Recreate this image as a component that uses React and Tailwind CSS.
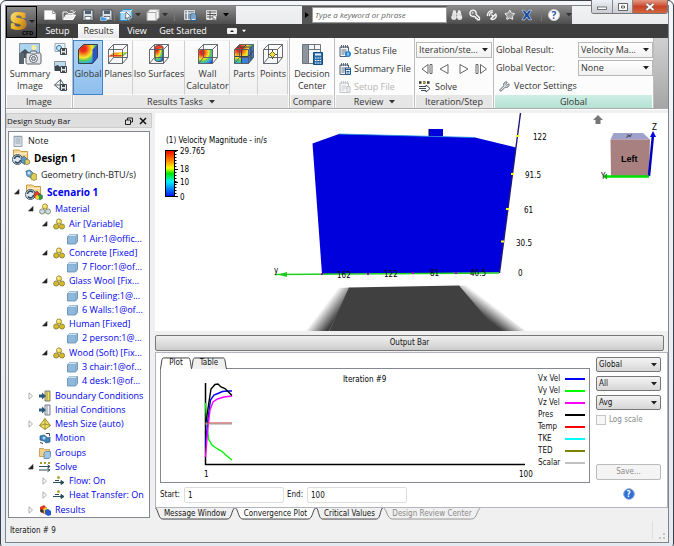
import React, { useState } from 'react';
import clsx from 'clsx';
import { Star, Wrench, SatelliteDish, Binoculars, KeyRound } from 'lucide-react';

const WIRE = 'M1.5 6.5h14v14h-14zM1.5 6.5l5-5h14l-5 5M20.5 1.5v13l-5 6M6.5 1.5v13h14M1.5 20.5l5-6';

const treeItems = [
  { label: 'Air [Variable]', pad: 'pl-8', icon: 'mat', open: true },
  { label: '1 Air:1@offic...', pad: 'pl-[57px]', icon: 'part' },
  { label: 'Concrete [Fixed]', pad: 'pl-8', icon: 'mat', open: true },
  { label: '7 Floor:1@of...', pad: 'pl-[57px]', icon: 'part' },
  { label: 'Glass Wool [Fix...', pad: 'pl-8', icon: 'mat', open: true },
  { label: '5 Ceiling:1@...', pad: 'pl-[57px]', icon: 'part' },
  { label: '6 Walls:1@of...', pad: 'pl-[57px]', icon: 'part' },
  { label: 'Human [Fixed]', pad: 'pl-8', icon: 'mat', open: true },
  { label: '2 person:1@...', pad: 'pl-[57px]', icon: 'part' },
  { label: 'Wood (Soft) [Fix...', pad: 'pl-8', icon: 'mat', open: true },
  { label: '3 chair:1@of...', pad: 'pl-[57px]', icon: 'part' },
  { label: '4 desk:1@of...', pad: 'pl-[57px]', icon: 'part' },
  { label: 'Boundary Conditions', pad: 'pl-[18px]', icon: 'boundary', open: false },
  { label: 'Initial Conditions', pad: 'pl-[30px]', icon: 'initial' },
  { label: 'Mesh Size (auto)', pad: 'pl-[18px]', icon: 'mesh', open: false },
  { label: 'Motion', pad: 'pl-[30px]', icon: 'motion' },
  { label: 'Groups', pad: 'pl-[30px]', icon: 'groups' },
  { label: 'Solve', pad: 'pl-[18px]', icon: 'solve', open: true },
  { label: 'Flow: On', pad: 'pl-8', icon: 'flow', open: false },
  { label: 'Heat Transfer: On', pad: 'pl-8', icon: 'flow', open: false },
  { label: 'Results', pad: 'pl-[18px]', icon: 'results', open: false },
];

const series = [
  ['Vx Vel', '#0000ff'],
  ['Vy Vel', '#00ff00'],
  ['Vz Vel', '#ff00ff'],
  ['Pres', '#000000'],
  ['Temp', '#ff0000'],
  ['TKE', '#00ffff'],
  ['TED', '#808000'],
  ['Scalar', '#c0c0c0'],
];

const Rainbow = ({ id }) => (
  <radialGradient id={id} cx="25%" cy="22%" r="95%">
    <stop offset="0.15" stopColor="#e8281c" />
    <stop offset="0.32" stopColor="#f58a1c" />
    <stop offset="0.5" stopColor="#f8e72c" />
    <stop offset="0.66" stopColor="#5cc95a" />
    <stop offset="0.8" stopColor="#33b6dd" />
    <stop offset="1" stopColor="#2b50d0" />
  </radialGradient>
);

const TaskIcon = ({ kind }) => {
  const fill = `url(#${kind})`;
  return (
    <svg viewBox="0 0 22 22" className="h-[22px] w-[22px]" fill="none">
      <defs>
        <Rainbow id={kind} />
      </defs>
      {kind === 'global' && (
        <>
          <path d="M1.5 6.5l5-5h14v13l-5 6h-14z" fill={fill} />
          <path d="M15.5 6.5l5-5v13l-5 6z" fill="#2c55c8" />
          <path d="M1.5 6.5l5-5h14v13l-5 6h-14z" stroke="#3a3f48" strokeLinejoin="round" />
        </>
      )}
      {kind === 'planes' && (
        <>
          <path d="M1.5 13.5l5-4h14l-5 4z" fill="#f5a51e" />
          <path d="M9 13.5l4-4h7.5l-5 4z" fill="#f5e32c" />
          <path d="M1.5 13.5l2-1.6h12l-2 1.6z" fill="#e8401c" />
          <path d="M14 13.5l4-4h2.5l-5 4z" fill="#55c060" />
        </>
      )}
      {kind === 'iso' && (
        <>
          <path d="M7 4c0-2 8-2 8 0v13c0 2-8 2-8 0z" fill={fill} stroke="#3a3f48" />
          <ellipse cx="11" cy="4" rx="4" ry="1.5" fill="#e8402c" />
        </>
      )}
      {kind === 'wall' && <path d="M1.5 6.5h14v14h-14z" fill={fill} />}
      {kind === 'parts' && (
        <>
          <path d="M1.5 6.5l5-5h14v13l-5 6h-14z" fill={fill} />
          <path d="M15.5 6.5l5-5v13l-5 6zM8.5 13.5h7v7h-7z" fill="#3f7ed8" />
          <path d="M13.5 1.5l-5 5v14M1.5 13.5h14l5-6M4 4h14v13" stroke="#3a3f48" />
        </>
      )}
      {kind !== 'global' && <path d={WIRE} stroke="#555a61" strokeWidth="0.9" strokeLinejoin="round" />}
      {kind === 'points' && (
        <>
          <path d="M10.5 7v9M6 11.5h9" stroke="#3a3f48" />
          <path d="M10.5 8.5l3 3-3 3-3-3z" fill="#f5dc3c" stroke="#62752a" />
        </>
      )}
    </svg>
  );
};

const Balls = ({ front }) => (
  <>
    <circle cx="6" cy="3.5" r="2.6" fill="#efd95a" stroke="#857019" strokeWidth="0.7" />
    <circle cx="3.2" cy="8.5" r="2.6" fill={front} stroke="#68703a" strokeWidth="0.7" />
    <circle cx="9" cy="8.5" r="2.6" fill={front} stroke="#68703a" strokeWidth="0.7" />
    <circle cx="5.3" cy="2.8" r="0.9" fill="#fff8cf" />
  </>
);

const TreeIcon = ({ name }) => (
  <svg viewBox="0 0 12 12" className="h-3 w-3 shrink-0" fill="none">
    {name === 'note' && (
      <>
        <path d="M2 1.5h8v10H2z" fill="#d9e1ea" stroke="#98a5b3" />
        <path d="M3.5 4h5M3.5 6h5M3.5 8h5M3 .5v2M5 .5v2M7 .5v2M9 .5v2" stroke="#8796a7" strokeWidth="0.8" />
      </>
    )}
    {name === 'geometry' && (
      <>
        <path d="M1 2l4-1 4 4-2 4-5-2z" fill="#6ba3cd" stroke="#376c94" strokeWidth="0.8" />
        <path d="M6 6l3-2 3 2v4l-3 1.5-3-1.5z" fill="#e0cd57" stroke="#8a7d28" strokeWidth="0.8" />
        <circle cx="4" cy="4" r="1.5" fill="#c5e0f2" />
      </>
    )}
    {name === 'material' && <Balls front="#c7dcea" />}
    {name === 'mat' && <Balls front="#d9b928" />}
    {name === 'part' && (
      <>
        <path d="M1.5 3.5l2-2h8v7l-2 2.5h-8z" fill="#8fb9dc" stroke="#5d87ad" strokeWidth="0.8" />
        <path d="M1.5 3.5l2-2h8l-2 2z" fill="#cfe3f3" />
        <path d="M1.5 3.5h8V11M9.5 3.5l2-2" stroke="#7aa2c6" strokeWidth="0.7" />
      </>
    )}
    {(name === 'boundary' || name === 'initial') && (
      <>
        <path d="M6 1h5v10H6z" fill={name === 'boundary' ? '#f3df45' : '#eef1f3'} stroke="#55606a" strokeWidth="0.8" />
        <path d="M8 1v10" stroke="#7d868e" strokeWidth="0.8" />
        <path d="M0 4.5h3v-2l4 3.5-4 3.5v-2H0z" fill="#2e5b7c" />
      </>
    )}
    {name === 'mesh' && (
      <>
        <path d="M6 .5l5.5 7L6 11.5.5 7.5z" fill="#f1df6b" stroke="#92801d" strokeWidth="0.9" />
        <path d="M6 .5v11M.5 7.5L6 6l5.5 1.5" stroke="#92801d" strokeWidth="0.8" />
      </>
    )}
    {name === 'motion' && (
      <>
        <path d="M1 4l4-1 4 3 2-1v5l-4 1-2-2-4-1z" fill="#3d84b8" stroke="#1e5580" strokeWidth="0.7" />
        <path d="M7 1.5h3.5V4M1 10.5l3 1" stroke="#444" />
        <circle cx="5" cy="6" r="1.5" fill="#b6d7ee" />
      </>
    )}
    {name === 'groups' && (
      <>
        <path d="M.5 1.5h4l1 1h5v7H.5z" fill="#f0cf88" stroke="#bd9345" strokeWidth="0.8" />
        <path d="M5 6l1.5-1.5h5v5L10 11.5H5z" fill="#9fc5e4" stroke="#5582a8" strokeWidth="0.8" />
      </>
    )}
    {name === 'solve' && (
      <>
        <path d="M1 2h2M5 2h2M9 2h2" stroke="#a79b25" strokeWidth="2" />
        <path d="M0 5.5h11M0 9h11M8.5 3.8L11 5.5 8.5 7.2M8.5 7.3L11 9l-2.5 1.7" stroke="#294f5f" />
      </>
    )}
    {name === 'flow' && (
      <>
        <circle cx="5.5" cy="2.5" r="1.5" fill="#b6a52c" />
        <path d="M0 7.5h11M8 5.5l3 2-3 2zM2 5.5h4" stroke="#294f5f" fill="#294f5f" />
      </>
    )}
    {name === 'results' && (
      <>
        <path d="M1 3l4-2 3 3v4L5 10 1 7z" fill="#e03a20" />
        <path d="M3 6l4-3 2 3-3 4z" fill="#f2d32f" />
        <path d="M6 6l3-1 3 2v4l-3 1-3-2z" fill="#2b56c9" />
        <circle cx="3" cy="7" r="1.8" fill="#333" />
      </>
    )}
  </svg>
);

const FolderIcon = ({ scenario }) => (
  <svg viewBox="0 0 18 17" className="h-[17px] w-[18px] shrink-0" fill="none">
    <path d="M1.5 3V1h6L9 2.5h6.5V13h-14z" fill="#f7d893" stroke="#c89a45" />
    <path d="M2 4.5h13" stroke="#fff0c8" />
    <circle cx="5.5" cy="10.5" r="5" fill="#dfe7ed" stroke="#3f5b70" />
    <path d="M2.5 10a3 3 0 015.5-1.5M8.5 11a3 3 0 01-5.5 1.5" stroke="#2d4a60" strokeWidth="1.6" />
    <path d="M9 9l3-2 3 3v4l-3 1.5-3-3z" fill={scenario ? '#e33a22' : '#5c97c4'} stroke="#394c5a" strokeWidth="0.6" />
    <path d="M13 11l2.5-1 2 1.5v3L15 16l-2-1.5z" fill={scenario ? '#2d9b3a' : '#e0cd57'} stroke="#394c5a" strokeWidth="0.5" />
    {scenario && <path d="M10.5 12l2-1 1.5 1.5v2l-1.5 1-2-1z" fill="#f2d32f" />}
  </svg>
);

const Twisty = ({ open }) => (
  <svg viewBox="0 0 8 8" className="mr-1 h-2 w-2 shrink-0">
    {open ? <path d="M6 1.5V6H1.5z" fill="#222" stroke="#222" strokeWidth="0.6" /> : <path d="M2 .8L5.5 4 2 7.2z" fill="#fff" stroke="#999" strokeWidth="0.8" />}
  </svg>
);

const Caret = ({ className }) => (
  <svg viewBox="0 0 6 4" className={clsx('h-1 w-1.5 shrink-0', className)}>
    <path d="M0 0h6L3 3.5z" fill="currentColor" />
  </svg>
);

const Picker = ({ label, value, className, selectClass }) => (
  <div className={clsx('relative', className)}>
    <select aria-label={label} defaultValue={value} className={clsx('block w-full appearance-none truncate border pr-3 pl-0.5 outline-none', selectClass)}>
      <option>{value}</option>
    </select>
    <Caret className="pointer-events-none absolute top-1/2 right-1 -translate-y-1/2 text-[#222]" />
  </div>
);

const PageIcon = ({ kind }) => (
  <svg viewBox="0 0 12 12" className="h-3 w-3 shrink-0" fill="none">
    <g opacity={kind === 'setup' ? 0.35 : 1}>
      <path d="M1 2h8.5v9.5H1z" fill="#f3f5f7" stroke="#51606e" />
      <path d="M2.5 0v3M4.5 0v3M6.5 0v3M8.5 0v3M2.5 5h5M2.5 7h5M2.5 9h3" stroke="#51606e" strokeWidth="0.9" />
      {kind === 'status' && (
        <>
          <circle cx="9" cy="9" r="3" fill="#2486d8" />
          <path d="M9 8v2.5M9 6.6v.8" stroke="#fff" />
        </>
      )}
      {kind === 'summary' && (
        <>
          <path d="M6.5 5h5v6.5h-5z" fill="#fff" stroke="#1e5a92" />
          <path d="M7 6.5h4M7.5 8.5h3M7.5 10h3" stroke="#1e5a92" />
        </>
      )}
      {kind === 'setup' && <path d="M8 5.5h3v6H8z" fill="#ddd" stroke="#51606e" />}
    </g>
  </svg>
);

const Panel = ({ title, className, arrow, tint, children }) => (
  <section className={clsx('flex shrink-0 flex-col border-r border-[#bdbdbd] bg-[#fcfcfc] pt-0.5', className)}>
    <div className="flex flex-1">{children}</div>
    <h2 className={clsx('mx-px flex h-[13px] items-center justify-center gap-1.5', tint ? 'bg-linear-to-b from-[#cdeee4] to-[#b5e2d4]' : 'bg-[#e6e6e6]')}>
      {title}
      {arrow && <Caret />}
    </h2>
  </section>
);

const TaskButton = ({ kind, label, className, active, onClick }) => (
  <button
    onClick={onClick}
    className={clsx(
      'flex shrink-0 flex-col items-center border pt-0.5',
      active ? 'border-[#3f83c9] bg-linear-to-b from-[#b5d5f5] to-[#8fbfee]' : 'border-transparent border-r-[#cfcfcf] bg-linear-to-b from-[#fcfcfc] to-[#f0f0f0]',
      className
    )}
  >
    <TaskIcon kind={kind} />
    <span className="mt-[3px]">{label}</span>
  </button>
);

const ToolIcon = ({ kind }) => (
  <svg viewBox="0 0 14 12" className="h-3 w-3.5 shrink-0" fill="none">
    {kind === 'new' && (
      <>
        <path d="M1.5 1.5h8l3 3v6h-11z" fill="#fff" stroke="#ccc" />
        <path d="M9.5 1.5v3h3" stroke="#999" />
      </>
    )}
    {kind === 'open' && (
      <>
        <path d="M1 10.5V3h4l1 1.5h5V6" stroke="#f0f0f0" />
        <path d="M1.5 10.5L4 6h9.5L11 10.5z" fill="#eee" stroke="#fff" />
        <path d="M8 2.5c2-2 4-1 4 1M12 4l1.5-1.5M12 4l-1.5-1" stroke="#eee" />
      </>
    )}
    {(kind === 'save' || kind === 'saveas') && (
      <>
        <path d="M2 1h10v10.5H2z" fill="#dce2e7" stroke="#46525d" />
        <path d="M4 1.5h6V5H4z" fill="#51606d" />
        <path d="M4 7.5h6V11H4z" fill="#fff" stroke="#46525d" strokeWidth="0.8" />
        {kind === 'saveas' && <path d="M0 9c2-3 4 1 7-1l-1 4H1z" fill="#4b9ad5" stroke="#e8f3fb" strokeWidth="0.6" />}
      </>
    )}
    {(kind === 'cube' || kind === 'bluecube') && (
      <>
        <path d="M1 3.5L4 .5h9v8l-3 3H1z" fill={kind === 'cube' ? '#f4f4f4' : '#a8d5ee'} stroke={kind === 'cube' ? '#aaa' : '#2e8ec3'} />
        <path d="M1 3.5h9v8M10 3.5l3-3" stroke={kind === 'cube' ? '#aaa' : '#e7f6ff'} />
        {kind === 'bluecube' && <path d="M7 3l5 5H9.5l1 3-1.5.5-1-3L6.5 10z" fill="#fff" stroke="#333" strokeWidth="0.6" />}
      </>
    )}
    {(kind === 'book' || kind === 'list') && (
      <>
        <path d="M1.5 1.5h10v9h-10z" fill={kind === 'list' ? '#f1f1f1' : '#8b98a5'} stroke="#d6d6d6" />
        <path d={kind === 'list' ? 'M2 3h9M2 5.5h9M2 8h9M5 2v8' : 'M4.5 1.5v9M2 4h9'} stroke={kind === 'list' ? '#555' : '#eee'} />
        {kind === 'book' && <path d="M8 5h5v6.5H8zM9 7h3M9 9h3" fill="#dcecf9" stroke="#1f5f9d" />}
        {kind === 'list' && <path d="M8 5l5 4h-2l1 2.5h-1.5l-1-2L8 10.5z" fill="#fff" stroke="#333" strokeWidth="0.6" />}
      </>
    )}
  </svg>
);

const tabPaths = {
  up: 'M0.5 12.5C3.5 11 3 1 8 1H72C77 1 76.5 11 79.5 12.5',
  down: 'M0.5 0C3.5 2 3 11.5 8 11.5H72C77 11.5 76.5 2 79.5 0',
};

const Tab = ({ label, dir = 'down', active, disabled, className }) => (
  <button disabled={disabled} className={clsx('relative flex h-3 shrink-0 items-center justify-center whitespace-nowrap', disabled && 'text-[#8a8a8a]', active && 'z-10', className)}>
    <svg viewBox="0 0 80 12.5" preserveAspectRatio="none" className="absolute inset-0 h-full w-full">
      <path d={tabPaths[dir]} fill={active ? '#fff' : '#f0f0f0'} stroke={disabled ? '#999' : '#444'} vectorEffect="non-scaling-stroke" />
    </svg>
    <span className="relative">{label}</span>
  </button>
);

const Scene = () => (
  <svg viewBox="0 0 513 218" preserveAspectRatio="xMinYMid slice" className="block h-[218px] w-full bg-white" fontSize="8">
    <defs>
      <linearGradient id="scale" x1="0" y1="0" x2="0" y2="1">
        <stop offset="0" stopColor="#f00000" />
        <stop offset="0.25" stopColor="#ff9a00" />
        <stop offset="0.38" stopColor="#ffff00" />
        <stop offset="0.5" stopColor="#00e800" />
        <stop offset="0.68" stopColor="#00f0ff" />
        <stop offset="1" stopColor="#0010f0" />
      </linearGradient>
      <linearGradient id="fadeL" gradientUnits="userSpaceOnUse" x1="167" y1="196" x2="180" y2="206">
        <stop offset="0" stopColor="#fff" />
        <stop offset="1" stopColor="#404040" />
      </linearGradient>
      <linearGradient id="fadeR" gradientUnits="userSpaceOnUse" x1="342" y1="195" x2="333" y2="207">
        <stop offset="0" stopColor="#fff" />
        <stop offset="1" stopColor="#404040" />
      </linearGradient>
    </defs>

    {/* floor shadow */}
    <path d="M183 175l12-.5-21 44h-24z" fill="url(#fadeL)" />
    <path d="M303 172.5h10l58 46h-29z" fill="url(#fadeR)" />
    <path d="M194 174.5l110-2 39 46H174z" fill="#404040" />

    {/* room */}
    <path d="M157.5 30.5L184 21l136 3.5 41 10-16.5 125L167 161z" fill="#0000dc" />
    <path d="M274 16h14v7.5h-14z" fill="#0000dc" />
    <path d="M274 16v7" stroke="#000040" />
    <path d="M184 21l136 3.5" stroke="#2090d8" strokeWidth="0.8" />
    <path d="M365.5 0l-21 160" stroke="#201878" strokeWidth="1.4" />
    <path d="M361 23h3M356 61h3M351 96h3M346 128.5h3" stroke="#ffff00" strokeWidth="2" />
    <path d="M120 161.5l224-1.5" stroke="#20d020" strokeWidth="1.4" />
    <path d="M123 161.5l9-2.5v5z" fill="#20c820" />
    <path d="M166 161h2M212 161h2M257 160h2M300 160h2" stroke="#a000c0" strokeWidth="2" />
    <text x="119" y="160">y</text>
    <text x="182" y="165">162</text>
    <text x="229" y="164">122</text>
    <text x="275" y="163">81</text>
    <text x="315" y="163">40.5</text>
    <text x="378" y="27">122</text>
    <text x="370" y="65">91.5</text>
    <text x="369" y="100">61</text>
    <text x="361" y="133">30.5</text>
    <text x="363" y="163">0</text>

    {/* colour scale */}
    <text x="11" y="30">(1) Velocity Magnitude - in/s</text>
    <path d="M10.5 37.5h9v46h-9z" fill="url(#scale)" stroke="#000" />
    <path d="M20.5 38v46" stroke="#000" strokeWidth="2" strokeDasharray="1 2" />
    <path d="M10 37.5h13M20 56.5h3M20 69.5h3M10 83.5h13" stroke="#000" />
    <text x="25" y="41">29.765</text>
    <text x="25" y="59">18</text>
    <text x="25" y="72">10</text>
    <text x="25" y="87">0</text>

    {/* view cube */}
    <path d="M443 2l5 5h-2.5v4h-5V7H438z" fill="#777" />
    <path d="M455.5 26.5l3-6.5H488l7 6.5z" fill="#a0a0cc" />
    <path d="M455.5 26.5H495L494 63h-38z" fill="#a88080" />
    <path d="M471 24.5l6-3M472 21.5l4 2.5" stroke="#333" strokeWidth="0.8" />
    <path d="M494 63l4-41" stroke="#0000b8" strokeWidth="2.5" />
    <path d="M498 18l3 6h-6z" fill="#0000e8" />
    <path d="M494 63.5h-44" stroke="#00e000" strokeWidth="2.5" />
    <path d="M448 63.5l4-3v6z" fill="#00b000" />
    <text x="497" y="17">Z</text>
    <text x="446" y="66">Y</text>
    <text x="466" y="49" fontSize="9" className="font-['Liberation_Sans',sans-serif] font-bold">
      Left
    </text>
  </svg>
);

const ConvergencePlot = () => (
  <svg viewBox="0 0 376 113" preserveAspectRatio="xMinYMin meet" className="h-[113px] min-w-0 flex-1" fill="none" strokeWidth="1.4" fontSize="8">
    <g>
      <path d="M44.5 14v81.5H364" stroke="#000" strokeWidth="1.5" />
      <path d="M44.5 34l1 16 2 20 3.5 6 5.5 4 4 2 5.5 5 5 4" stroke="#00f000" />
      <path d="M44.5 76L47 50l2.5-19 3.5-5 5-2 3.5-1.500L66 22h5" stroke="#0000ff" />
      <path d="M44.5 88l2-25L49 41l3-8 4.5-3 6.5-2 8-1" stroke="#ff00ff" />
      <path d="M45 53l2.5-17L50 20l4-4.5 3-.5 3 3 4 1.5 3.5 3.5 3.5 3.5" stroke="#000" />
      <path d="M44 54h27" stroke="#d03030" strokeWidth="1" />
      <path d="M44 55h27" stroke="#999" strokeWidth="1" />
    </g>
    <g fill="#000" stroke="none">
      <text x="182" y="13">Iteration #9</text>
      <text x="43" y="108">1</text>
      <text x="358" y="108">100</text>
    </g>
  </svg>
);

const ribbonSelect = 'h-4 border-[#b8b8b8] bg-linear-to-b from-white to-[#f1f1f1]';
const outputSelect = 'h-[15px] rounded-[2px] border-[#777] bg-linear-to-b from-[#f4f4f4] to-[#d6d6d6]';

const TitleBar = () => (
  <header className="relative flex h-8 bg-linear-to-b from-[#f1f2f4] to-[#e6e6e8]">
    <button aria-label="Application menu" className="z-10 w-[31px] shrink-0 border border-black bg-linear-to-b from-[#8a8a8a] to-[#3a3a3a]">
      <svg viewBox="0 0 29 30" className="block h-full w-full">
        <defs>
          <linearGradient id="gold" x1="0" y1="0" x2="1" y2="1">
            <stop offset="0" stopColor="#ffe89a" />
            <stop offset="0.5" stopColor="#f0b42a" />
            <stop offset="1" stopColor="#9d6208" />
          </linearGradient>
        </defs>
        <text x="3" y="22" fontSize="23" fill="url(#gold)" stroke="url(#gold)" strokeWidth="2" className="font-['DejaVu_Serif',serif] font-bold">
          S
        </text>
        <text x="15" y="28" fontSize="6" className="font-bold">
          CFD
        </text>
        <path d="M22 13h6l-3 3z" fill="#222" />
      </svg>
    </button>
    <div className="flex min-w-0 flex-1 flex-col">
      <div className="flex h-[18px]">
        <div className="flex w-[199px] shrink-0 items-center bg-linear-to-b from-[#8c8c8c] to-[#4d4d4d] pl-1.5">
          <div className="flex gap-[5px]">
            <ToolIcon kind="new" />
            <ToolIcon kind="open" />
            <ToolIcon kind="save" />
            <ToolIcon kind="saveas" />
          </div>
          <div className="flex items-center gap-0.5 border-l border-[#777] pl-1">
            <ToolIcon kind="bluecube" />
            <Caret className="mr-[3px] text-[#333]" />
            <ToolIcon kind="cube" />
            <Caret className="text-[#333]" />
          </div>
          <div className="ml-1.5 flex items-center gap-2 border-l border-[#777] pl-2">
            <ToolIcon kind="book" />
            <ToolIcon kind="list" />
          </div>
          <Caret className="ml-1 text-black" />
        </div>
        <div className="w-[66px] shrink-0" />
        <div className="flex w-[145px] shrink-0 bg-[#555]">
          <div className="flex w-2.5 items-center justify-center">
            <svg viewBox="0 0 4 6" className="h-1.5 w-1">
              <path d="M0 0l4 3-4 3z" fill="#000" />
            </svg>
          </div>
          <input aria-label="Search" placeholder="Type a keyword or phrase" className="my-px min-w-0 flex-1 border border-[#999] bg-white px-0.5 text-[8px] italic placeholder:text-[#666]" />
        </div>
        <div className="flex w-[125px] shrink-0 items-center gap-1.5 bg-linear-to-b from-[#8c8c8c] to-[#4d4d4d] pl-1 text-[#f4f4f4]">
          <Binoculars size={12} className="fill-[#ddd]" />
          <KeyRound size={12} strokeWidth={3} className="-scale-x-100" />
          <SatelliteDish size={12} strokeWidth={3} className="-scale-x-100" />
          <Star size={12} className="fill-[#999]" />
          <svg viewBox="0 0 12 12" className="h-3 w-3">
            <path d="M1 1h3l2 3 2-3h3L8 6l3 5H8L6 8l-2 3H1l3-5z" fill="#1c4fa0" stroke="#dfe9f8" strokeWidth="0.6" />
          </svg>
          <div className="ml-0.5 flex items-center gap-1.5 border-l border-[#777] pl-1.5">
            <svg viewBox="0 0 12 12" className="h-3 w-3">
              <circle cx="6" cy="6" r="5.5" fill="#fff" stroke="#ccc" />
              <text x="3.5" y="9.5" fontSize="10" fill="#1f56b0" className="font-bold">
                ?
              </text>
            </svg>
            <Caret className="text-[#333]" />
          </div>
        </div>
      </div>
      <nav className="flex h-3.5 items-stretch bg-[#3e3e3e] text-white">
        <button className="w-[41px]">Setup</button>
        <button className="w-[41px] bg-linear-to-b from-white to-[#e8e8e8] text-[#222]">Results</button>
        <button className="w-9">View</button>
        <button className="w-14">Get Started</button>
        <button aria-label="Minimize ribbon" className="ml-4 flex items-center gap-1">
          <svg viewBox="0 0 10 6" className="h-1.5 w-2.5">
            <rect width="10" height="6" rx="1" fill="#f0f0f0" />
            <path d="M3 4h4L5 2z" fill="#222" />
          </svg>
          <Caret className="scale-75" />
        </button>
      </nav>
    </div>
    <div className="absolute -top-1.5 right-0 flex h-3.5 overflow-hidden rounded-b-[3px] border border-t-0 border-[#777]">
      <button aria-label="Minimize" className="flex w-[21px] items-center justify-center border-r border-[#888] bg-linear-to-b from-[#eef1f5] to-[#c9cdd3]">
        <svg viewBox="0 0 10 8" className="h-2 w-2.5">
          <rect x=".5" y="4" width="9" height="2.5" fill="#fff" stroke="#555" strokeWidth="0.8" />
        </svg>
      </button>
      <button aria-label="Restore" className="flex w-5 items-center justify-center border-r border-[#888] bg-linear-to-b from-[#eef1f5] to-[#c9cdd3]">
        <svg viewBox="0 0 10 8" className="h-2 w-2.5">
          <path d="M.5.5h9v7h-9zM3.5 3h3v2h-3z" fill="#fff" stroke="#555" strokeWidth="0.9" />
        </svg>
      </button>
      <button aria-label="Close" className="flex w-[34px] items-center justify-center bg-linear-to-b from-[#e39a85] via-[#c8432a] to-[#d4663c]">
        <svg viewBox="0 0 10 8" className="h-2 w-2.5">
          <path d="M1.5 1l7 6M8.5 1l-7 6" stroke="#555" strokeWidth="3" />
          <path d="M1.5 1l7 6M8.5 1l-7 6" stroke="#fff" strokeWidth="2" />
        </svg>
      </button>
    </div>
  </header>
);

const Ribbon = () => {
  const [task, setTask] = useState('global');
  const tasks = [
    ['global', 'Global', 'w-[30px]'],
    ['planes', 'Planes', 'w-[30px]'],
    ['iso', 'Iso Surfaces', 'w-[52px]'],
    ['wall', 'Wall Calculator', 'w-[45px]'],
    ['parts', 'Parts', 'w-7'],
    ['points', 'Points', 'w-[30px]'],
  ];
  return (
    <div className="flex h-[71px] border-b border-[#aaa] bg-linear-to-b from-[#d0d0d0] to-[#a6a6a6] text-[#333] [&_button]:whitespace-nowrap">
      <Panel title="Image" className="w-[67px]">
        <button className="flex w-12 flex-col items-center pt-[3px]">
          <svg viewBox="0 0 24 22" className="h-[22px] w-6" fill="none">
            <path d="M1.5.5h20v14h-20z" fill="#a9d3ee" stroke="#8a949c" />
            <circle cx="16" cy="4.5" r="2.5" fill="#fbeb9b" />
            <path d="M2 10l5-4 7 6v3H2z" fill="#46515c" />
            <rect x="8" y="10" width="15" height="11" rx="1.5" fill="#e5e7ea" stroke="#59626b" />
            <path d="M12 10l1-2h5l1 2" fill="#e5e7ea" stroke="#59626b" />
            <circle cx="15.5" cy="15.5" r="4" fill="#fff" stroke="#59626b" />
            <circle cx="15.5" cy="15.5" r="2" fill="#c3ccd4" stroke="#59626b" />
            <path d="M1 10h5v11H1z" fill="#5a6570" />
          </svg>
          <span className="mt-[3px]">Summary<br />Image</span>
        </button>
        <div className="flex flex-col gap-1.5 pt-[3px]">
          {['view', 'image', 'model'].map((kind) => (
            <button key={kind} aria-label={`Save ${kind}`}>
              <svg viewBox="0 0 13 12" className="block h-3 w-[13px]" fill="none">
                {kind === 'view' && (
                  <>
                    <path d="M1 .5h10v8H1z" fill="#e8f2f9" stroke="#9aa9b5" />
                    <circle cx="5" cy="5" r="2.5" fill="#cfe6f6" stroke="#2e77b0" />
                  </>
                )}
                {kind === 'image' && (
                  <>
                    <path d="M.5.5h11v9H.5z" fill="#bcdcf0" stroke="#88939c" />
                    <path d="M1 5l3-1 4 4v2H1z" fill="#3c4650" />
                  </>
                )}
                {kind === 'model' && <path d="M.5 6l6-5.5L10 6l-4 4.5zM6.5.5L6 10.5M.5 6H10" stroke="#59626b" />}
                <path d="M6.5 5.5h6v6h-6z" fill="#e6e6e6" stroke="#3f4850" />
                <path d="M8 6h3v2H8zM8 9.5h3v2H8z" fill="#3f4850" />
              </svg>
            </button>
          ))}
        </div>
      </Panel>
      <Panel title="Results Tasks" arrow className="w-[217px]">
        {tasks.map(([kind, label, width]) => (
          <TaskButton
            key={kind}
            kind={kind}
            label={kind === 'wall' ? <>Wall<br />Calculator</> : label}
            className={width}
            active={task === kind}
            onClick={() => setTask(kind)}
          />
        ))}
      </Panel>
      <Panel title="Compare" className="w-[45px]">
        <button className="flex w-full flex-col items-center pt-[3px]">
          <svg viewBox="0 0 22 22" className="h-[22px] w-[22px]" fill="none">
            <path d="M1.5 1.5h18v19h-18z" fill="#f4f5f6" stroke="#6c757e" />
            <path d="M2 2h5v18H2z" fill="#8d969e" />
            <path d="M7.5 2v18M8 6.5h11M13.5 2v5" stroke="#6c757e" />
            <path d="M12.5 9.5h9v12h-9z" fill="#2a6ba6" stroke="#174d80" />
            <path d="M14 11.5h6" stroke="#dff0fb" strokeWidth="2" />
            <path d="M14 15h6M14 17.5h6M14 20h6" stroke="#fff" strokeDasharray="1.5 .8" />
          </svg>
          <span className="mt-[3px]">Decision<br />Center</span>
        </button>
      </Panel>
      <Panel title="Review" arrow className="w-20">
        <div className="flex flex-col gap-1 pt-1 pl-1">
          <button className="flex h-3.5 items-center gap-[3px]"><PageIcon kind="status" />Status File</button>
          <button className="flex h-3.5 items-center gap-[3px]"><PageIcon kind="summary" />Summary File</button>
          <button disabled className="flex h-3.5 items-center gap-[3px] text-[#b5b5b5]"><PageIcon kind="setup" />Setup File</button>
        </div>
      </Panel>
      <Panel title="Iteration/Step" className="w-[79px]">
        <div className="flex flex-1 flex-col gap-1 px-px pt-0.5">
          <Picker label="Iteration" value="Iteration/ste..." selectClass={ribbonSelect} />
          <div className="flex h-3.5 items-center justify-between px-1">
            {['M8 1.5v9L2 6zM10 1.5h2v9h-2z', 'M10 1.5v9L2 6z', 'M3 1.5v9L11 6z', 'M1 1.5h2v9H1zM5.5 1.5v9l6-4.5z'].map((d, i) => (
              <button key={d} aria-label={['First', 'Previous', 'Next', 'Last'][i]}>
                <svg viewBox="0 0 13 12" className="block h-3 w-[13px]">
                  <path d={d} fill="#fff" stroke="#555" strokeWidth="0.9" />
                </svg>
              </button>
            ))}
          </div>
          <button className="flex h-3.5 items-center gap-1 pl-[3px]">
            <svg viewBox="0 0 12 12" className="h-3 w-3" fill="none">
              <path d="M0 1.5h2.5M4 1.5h2.5M8 1.5h2.5" stroke="#333" strokeWidth="2.5" />
              <path d="M4 1.5h2.5" stroke="#c4a52a" strokeWidth="1.5" />
              <path d="M0 5.5h7V4l4 3.5L7 11V9.5H2M0 7.5h7" stroke="#414b55" />
            </svg>
            Solve
          </button>
        </div>
      </Panel>
      <Panel title="Global" tint className="w-40">
        <div className="flex flex-1 flex-col gap-0.5 pt-0.5 pl-0.5">
          <div className="flex items-center justify-between">
            <span>Global Result:</span>
            <Picker label="Global Result" value="Velocity Ma..." className="w-[75px]" selectClass={ribbonSelect} />
          </div>
          <div className="flex items-center justify-between">
            <span>Global Vector:</span>
            <Picker label="Global Vector" value="None" className="w-[75px]" selectClass={ribbonSelect} />
          </div>
          <button className="flex h-4 items-center gap-1 pl-[3px]">
            <Wrench size={11} className="fill-[#dfe4e8] text-[#56616b]" />
            Vector Settings
          </button>
        </div>
      </Panel>
    </div>
  );
};

const StudyBar = () => (
  <aside className="flex w-[146px] shrink-0 flex-col pb-0.5 font-['Open_Sans','Noto_Sans',sans-serif]">
    <div className="mb-[3px] flex h-[15px] items-center justify-between border border-[#ccc] bg-[#dedede] pr-1">
      Design Study Bar
      <div className="flex items-center gap-1.5">
        <button aria-label="Float">
          <svg viewBox="0 0 8 8" className="block h-2 w-2" fill="none">
            <path d="M2.5 3V1h5v4h-2M.5 3h5v4.5h-5z" stroke="#222" />
          </svg>
        </button>
        <button aria-label="Close panel">
          <svg viewBox="0 0 8 8" className="block h-2 w-2">
            <path d="M1 1l6 6M7 1L1 7" stroke="#111" strokeWidth="1.5" />
          </svg>
        </button>
      </div>
    </div>
    <ul className="mr-0.5 ml-0.5 flex flex-1 flex-col justify-between overflow-hidden border border-[#828790] bg-white pt-px text-[9px] whitespace-nowrap text-[#0000f0]">
      <li className="flex h-4 items-center gap-1 pl-[3px] text-[#222]"><TreeIcon name="note" />Note</li>
      <li className="flex h-[17px] items-center gap-1 pl-[3px] text-[10px] font-bold text-black"><FolderIcon />Design 1</li>
      <li className="flex h-[17px] items-center gap-1 pl-4 text-[#222]"><TreeIcon name="geometry" />Geometry (inch-BTU/s)</li>
      <li className="flex h-[17px] items-center pl-1 text-[10px] font-bold"><Twisty open /><FolderIcon scenario /><span className="ml-1">Scenario 1</span></li>
      <li className="flex h-4 items-center pl-[18px]"><Twisty open /><TreeIcon name="material" /><span className="ml-1">Material</span></li>
      {treeItems.map(({ label, pad, icon, open }) => (
        <li key={label} className={clsx('flex h-3.5 items-center', pad)}>
          {open !== undefined && <Twisty open={open} />}
          <TreeIcon name={icon} />
          <span className="ml-1">{label}</span>
        </li>
      ))}
    </ul>
  </aside>
);

const OutputPanel = () => (
  <section className="mt-px border border-[#b4b4bc] bg-white pt-1 pr-1.5 pb-1 pl-1">
    <div className="flex gap-1.5">
      <div className="min-w-0 flex-1">
        <div className="flex">
          <Tab label="Plot" dir="up" active className="w-8" />
          <Tab label="Table" dir="up" className="-ml-px w-9" />
        </div>
        <div className="-mt-px flex border border-[#828790] bg-white">
          <ConvergencePlot />
          <ul className="w-[51px] shrink-0 pt-1 pr-1">
            {series.map(([name, color]) => (
              <li key={name} className="flex h-3 items-center justify-between">
                {name}
                <span className="h-0.5 w-5" style={{ backgroundColor: color }} />
              </li>
            ))}
          </ul>
        </div>
        <div className="flex items-center gap-[3px] pt-1">
          <label htmlFor="start" className="w-[21px]">Start:</label>
          <input id="start" defaultValue="1" className="h-4 w-[100px] rounded-[2px] border border-[#ddd] px-[3px]" />
          <label htmlFor="end" className="w-[17px]">End:</label>
          <input id="end" defaultValue="100" className="h-4 w-[100px] rounded-[2px] border border-[#ddd] px-[3px]" />
        </div>
      </div>
      <div className="flex w-[65px] shrink-0 flex-col gap-1">
        <Picker label="Region" value="Global" selectClass={outputSelect} />
        <Picker label="Quantity" value="All" selectClass={outputSelect} />
        <Picker label="Statistic" value="Avg" selectClass={outputSelect} />
        <label className="flex items-center gap-[3px] text-[#8a8a8a]">
          <input type="checkbox" disabled className="h-2.5 w-2.5 appearance-none border border-[#c4c4c4] bg-[#f7f7f7]" />
          Log scale
        </label>
        <button disabled className="mt-[34px] h-4 rounded-[2px] border border-[#bbb] bg-[#f4f4f4] text-[#8a8a8a]">Save...</button>
        <button aria-label="Help" className="mt-1 self-center">
          <svg viewBox="0 0 12 12" className="block h-3 w-3">
            <circle cx="6" cy="6" r="5.3" fill="#2d6fd8" stroke="#8da5c8" />
            <text x="3.6" y="9" fontSize="8" fill="#fff" className="font-bold">?</text>
          </svg>
        </button>
      </div>
    </div>
  </section>
);

export default function App() {
  return (
    <div className="flex min-h-screen flex-col bg-white font-['DejaVu_Sans_Condensed','DejaVu_Sans',sans-serif] text-[8px] leading-3 text-[#111]">
      <div className="flex flex-1 flex-col rounded-t-md rounded-b-sm border border-[#3c4048] bg-linear-to-b from-[#f4f6f9] to-[#e4eaf2] p-1">
        <div className="flex flex-1 flex-col border border-[#80848a] bg-[#f0f0f0]">
          <div className="font-['Open_Sans','Noto_Sans',sans-serif] text-[9px]">
            <TitleBar />
            <Ribbon />
          </div>
          <main className="flex flex-1 gap-[3px] border-t border-white pt-[3px]">
            <StudyBar />
            <div className="flex min-w-0 flex-1 flex-col">
              <Scene />
              <button className="mt-1 mr-1 h-4 rounded-[2px] border border-[#777] bg-linear-to-b from-[#f0f0f0] to-[#cdcdcd]">Output Bar</button>
              <OutputPanel />
              <div className="flex">
                <Tab label="Message Window" className="w-20" />
                <Tab label="Convergence Plot" active className="w-[81px]" />
                <Tab label="Critical Values" className="w-[67px]" />
                <Tab label="Design Review Center" disabled className="w-[98px]" />
              </div>
            </div>
          </main>
          <footer className="flex h-[22px] shrink-0 items-center justify-between pr-0.5 pl-1">
            <span>Iteration # 9</span>
            <svg viewBox="0 0 16 20" className="h-5 w-4">
              <path d="M2.5 0v18" stroke="#ddd" />
              <path d="M13 12h2v2h-2zM13 16h2v2h-2zM9 16h2v2H9z" fill="#c4c4c4" />
            </svg>
          </footer>
        </div>
      </div>
    </div>
  );
}
